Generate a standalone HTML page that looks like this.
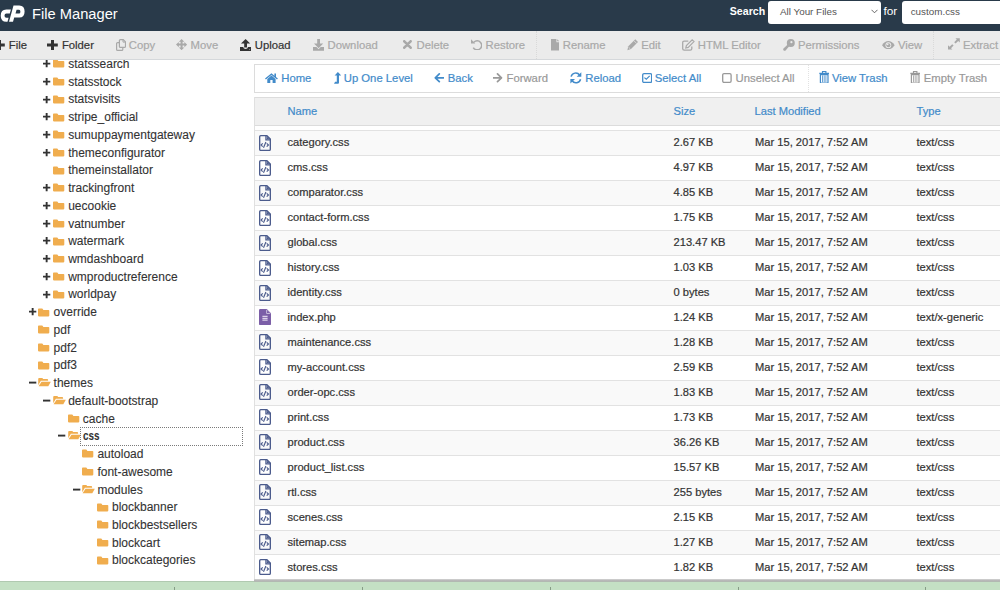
<!DOCTYPE html>
<html><head><meta charset="utf-8">
<style>
*{margin:0;padding:0;box-sizing:border-box}
html,body{width:1000px;height:590px;overflow:hidden;background:#fff;font-family:"Liberation Sans",sans-serif;position:relative}
.row span,#thead span,.tx{-webkit-text-stroke:0.2px currentColor}
.tt{-webkit-text-stroke:0.1px currentColor}
.abs{position:absolute}
#hdr{position:absolute;left:0;top:0;width:1000px;height:31px;background:#293a4a}
#title{position:absolute;left:32px;top:5px;font-size:14.7px;color:#fff;white-space:nowrap;line-height:18px}
#srch{position:absolute;left:729.8px;top:4px;font-size:10.6px;color:#fff;font-weight:bold;line-height:14px}
#sel{position:absolute;left:768px;top:0.5px;width:112.5px;height:23.5px;background:#fff;border-radius:3px}
#sel span{position:absolute;left:12px;top:5px;font-size:9.85px;color:#555;line-height:12px;white-space:nowrap}
#for{position:absolute;left:883.5px;top:4px;font-size:11.8px;color:#fff;line-height:14px}
#inp{position:absolute;left:902px;top:0.5px;width:110px;height:23.5px;background:#fff;border-radius:3px}
#inp span{position:absolute;left:8.7px;top:5px;font-size:9.85px;color:#555;line-height:12px;white-space:nowrap}
#tb{position:absolute;left:0;top:31px;width:1000px;height:28.5px;background:#ebebeb;border-bottom:1px solid #d5d8db}
.ti{position:absolute;top:0;height:28px;font-size:11.3px;line-height:28px;white-space:nowrap;color:#333}
.ti.d{color:#a6a6a6}
.ti svg{position:absolute}
.ti span{position:absolute;top:0}
.vdiv{position:absolute;top:0;width:1px;height:28px;border-left:1px dotted #d9d9d9}
#tb .tx{position:absolute;top:0;font-size:11.3px;line-height:28px;white-space:nowrap}
#nav .tx{position:absolute;top:0;font-size:11.3px;line-height:27px;white-space:nowrap}
.vdiv2{position:absolute;top:0;width:1px;height:27px;border-left:1px dotted #e2e2e2}
#tree{position:absolute;left:0;top:59.5px;width:254px;height:521.5px;overflow:hidden;background:#fff}
.tr{position:absolute;left:0;width:254px;height:9px}
.tr .pl,.tr .mi{position:absolute;top:1px;width:7.4px;height:7.4px}
.tr .pl:before,.tr .mi:before{content:"";position:absolute;left:0;top:2.85px;width:7.4px;height:1.7px;background:#333}
.tr .pl:after{content:"";position:absolute;left:2.85px;top:0;width:1.7px;height:7.4px;background:#333}
.tr svg{position:absolute;top:0}
.tt{position:absolute;top:-2.5px;font-size:12px;line-height:14px;color:#333;white-space:nowrap}
.tt.b{font-weight:bold;transform:scaleX(0.82);transform-origin:0 0}
#selbox{position:absolute;left:80px;top:427.2px;width:162.5px;height:18.5px;border:1px dotted #7a7a7a}
#main{position:absolute;left:254px;top:59.5px;width:746px;height:521.5px;overflow:hidden;background:#fff}
#nav{position:absolute;left:0;top:4px;width:760px;height:29px;border:1px solid #dcdcdc;background:#fff}
.ni{position:absolute;top:0;height:27px;font-size:11.3px;line-height:27px;white-space:nowrap;color:#428bca}
.ni.d{color:#999}
.ni svg{position:absolute}
.ni span{position:absolute;top:0}
#thead{position:absolute;left:0;top:37.5px;width:760px;height:28.5px;background:#f0f0f0;border:1px solid #dcdcdc}
#thead span{position:absolute;top:5.5px;font-size:11.15px;line-height:14px;color:#428bca}
#rows{position:absolute;left:0;top:0;width:746px}
.row{position:absolute;left:0;width:760px;height:25px;border-top:1px solid #e2e2e2;border-left:1px solid #e3e3e3}
.row span{position:absolute;top:4.2px;font-size:11.15px;line-height:14px;color:#333;white-space:nowrap}
.row .c1{left:32.5px}
.row .c2{left:418.5px}
.row .c3{left:500px}
.row .c4{left:661.5px}
.fi{position:absolute;left:3.9px;top:3.5px}
#shadow{position:absolute;left:254px;top:578.6px;width:746px;height:3.2px;background:linear-gradient(#d4d4d4,#adadad 70%,#b8c8b8);z-index:2}
#status{position:absolute;left:0;top:581px;width:1000px;height:9px;background:#c4e0c4;border-top:1px solid #b0c9b0}
.sd{position:absolute;top:587px;width:1px;height:3px;background:#869c86}
</style></head><body>
<div id="hdr">
 <svg class="abs" style="left:0;top:0" width="26" height="24" viewBox="0 0 26 24"><path d="M10.9 9.5H6.4Q0.7 9.5 0.7 15.65Q0.7 21.8 6.4 21.8H7.5L8.6 17.8H6.4Q4.5 17.8 4.5 15.65Q4.5 13.5 6.4 13.5H9.8Z" fill="#fff"/><path fill-rule="evenodd" d="M13.5 5.5H19.3Q24.6 5.5 24.6 11.55Q24.6 17.6 19.3 17.6H14.2L13 21.8H9ZM16.6 9.7H19Q20.4 9.7 20.4 11.65Q20.4 13.6 19 13.6H15.5Z" fill="#fff"/></svg>
 <div id="title">File Manager</div>
 <div id="srch">Search</div>
 <div id="sel"><span>All Your Files</span><svg class="abs" style="left:102.5px;top:8.8px" width="7" height="5" viewBox="0 0 7 5"><path d="M0.5 0.8L3.5 3.8L6.5 0.8" fill="none" stroke="#555" stroke-width="0.9"/></svg></div>
 <div id="for">for</div>
 <div id="inp"><span>custom.css</span></div>
</div>
<div id="tb">
<svg class="abs" style="left:-6.40px;top:8.75px" width="11" height="10.5" viewBox="0 0 11 10.5"><path d="M4 0H7V3.6H10.8V6.6H7V10.2H4V6.6H0V3.6H4Z" fill="#333"/></svg><span class="tx" style="left:8.75px;color:#333">File</span>
<svg class="abs" style="left:46.90px;top:8.75px" width="11" height="10.5" viewBox="0 0 11 10.5"><path d="M4 0H7V3.6H10.8V6.6H7V10.2H4V6.6H0V3.6H4Z" fill="#333"/></svg><span class="tx" style="left:61.90px;color:#333">Folder</span>
<svg class="abs" style="left:115.90px;top:8.10px" width="10" height="12" viewBox="0 0 10 12"><path d="M3.5 3.6H1.6Q0.6 3.6 0.6 4.6V10.4Q0.6 11.4 1.6 11.4H5.8Q6.8 11.4 6.8 10.4V8.6" fill="none" stroke="#a9a9a9" stroke-width="1.2"/><path d="M4.4 0.6H7.2L9.5 2.9V7.4Q9.5 8.4 8.5 8.4H4.4Q3.4 8.4 3.4 7.4V1.6Q3.4 0.6 4.4 0.6Z" fill="none" stroke="#a9a9a9" stroke-width="1.2"/><path d="M7 0.8V3.1H9.3" fill="none" stroke="#a9a9a9" stroke-width="1"/></svg><span class="tx" style="left:128.75px;color:#a9a9a9">Copy</span>
<svg class="abs" style="left:175.90px;top:7.70px" width="11.2" height="11.2" viewBox="0 0 11.2 11.2"><path d="M5.6 0L8.3 2.8H6.6V4.6H8.4V2.9L11.2 5.6L8.4 8.3V6.6H6.6V8.4H8.3L5.6 11.2L2.9 8.4H4.6V6.6H2.8V8.3L0 5.6L2.8 2.9V4.6H4.6V2.8H2.9Z" fill="#a9a9a9"/></svg><span class="tx" style="left:190.60px;color:#a9a9a9">Move</span>
<svg class="abs" style="left:239.70px;top:7.90px" width="11.2" height="12" viewBox="0 0 11.2 12"><path d="M5.6 0L10.2 4.5H7V8.4H4.2V4.5H1Z" fill="#333"/><path d="M0 8H3.2Q3.5 9.9 5.6 9.9Q7.7 9.9 8 8H11.2V11.9H0Z" fill="#333"/><circle cx="9.6" cy="10.6" r="0.45" fill="#ebebeb"/></svg><span class="tx" style="left:254.75px;color:#333">Upload</span>
<svg class="abs" style="left:312.90px;top:8.00px" width="11.2" height="12" viewBox="0 0 11.2 12"><path d="M4.2 0H7V4.6H10.2L5.6 9.2L1 4.6H4.2Z" fill="#a9a9a9"/><path d="M0 8.1H3.5L5.6 10.2L7.7 8.1H11.2V11.8H0Z" fill="#a9a9a9"/></svg><span class="tx" style="left:327.50px;color:#a9a9a9">Download</span>
<svg class="abs" style="left:402.70px;top:8.90px" width="9" height="9" viewBox="0 0 9 9"><path d="M1.3 1.3L7.6 7.7M7.6 1.3L1.3 7.7" stroke="#a9a9a9" stroke-width="2.6" stroke-linecap="round"/></svg><span class="tx" style="left:416.50px;color:#a9a9a9">Delete</span>
<svg class="abs" style="left:470.70px;top:8.10px" width="11.2" height="11" viewBox="0 0 11.2 11"><path d="M2.9 3.3A4.5 4.5 0 1 1 2.3 8.6" fill="none" stroke="#a9a9a9" stroke-width="1.5"/><path d="M0 0.3V4.6H4.3Z" fill="#a9a9a9"/></svg><span class="tx" style="left:485.60px;color:#a9a9a9">Restore</span>
<div class="vdiv" style="left:535.6px"></div>
<svg class="abs" style="left:550.90px;top:8.10px" width="8.5" height="11.5" viewBox="0 0 8.5 11.5"><path d="M0 0H5.4V3.2H8.3V11.5H0Z" fill="#a9a9a9"/><path d="M6.2 0.2L8.2 2.3H6.2Z" fill="#a9a9a9"/></svg><span class="tx" style="left:562.75px;color:#a9a9a9">Rename</span>
<svg class="abs" style="left:626.60px;top:8.10px" width="11.4" height="11.8" viewBox="0 0 11.4 11.8"><path d="M8.3 0.3L11 3L4 10L0.4 11.3L1.3 7.3Z" fill="#a9a9a9"/><path d="M7 1.8L9.6 4.4M1.5 8.1L3.4 10" stroke="#ebebeb" stroke-width="0.7"/></svg><span class="tx" style="left:641.25px;color:#a9a9a9">Edit</span>
<svg class="abs" style="left:681.90px;top:8.00px" width="12.8" height="12" viewBox="0 0 12.8 12"><path d="M6.3 2.2H2.2Q0.7 2.2 0.7 3.7V9.8Q0.7 11.2 2.2 11.2H8.3Q9.8 11.2 9.8 9.8V7.6" fill="none" stroke="#a9a9a9" stroke-width="1.3"/><path d="M10.2 0.8L12 2.6L6.2 8.4L3.8 9L4.4 6.6Z" fill="none" stroke="#a9a9a9" stroke-width="1.2"/></svg><span class="tx" style="left:697.75px;color:#a9a9a9">HTML Editor</span>
<svg class="abs" style="left:783.10px;top:8.10px" width="12" height="12" viewBox="0 0 12 12"><circle cx="7.8" cy="4" r="4" fill="#a9a9a9"/><path d="M5 5.2L6.6 6.8L2.6 11.4Q1.4 12.2 0.5 11.2Q-0.2 10.3 0.7 9.2Z" fill="#a9a9a9"/><circle cx="8.4" cy="3.2" r="1.1" fill="#ebebeb"/></svg><span class="tx" style="left:798.00px;color:#a9a9a9">Permissions</span>
<svg class="abs" style="left:882.20px;top:9.60px" width="12.8" height="8.5" viewBox="0 0 12.8 8.5"><path d="M0 4.15Q3 0 6.35 0Q9.7 0 12.7 4.15Q9.7 8.3 6.35 8.3Q3 8.3 0 4.15Z" fill="#a9a9a9"/><circle cx="6.35" cy="4.15" r="2.9" fill="#ebebeb"/><circle cx="6.35" cy="4.3" r="2" fill="#a9a9a9"/><circle cx="5.7" cy="3.4" r="0.8" fill="#ebebeb"/></svg><span class="tx" style="left:898.00px;color:#a9a9a9">View</span>
<div class="vdiv" style="left:933.1px"></div>
<svg class="abs" style="left:947.90px;top:7.40px" width="12" height="12" viewBox="0 0 12 12"><path d="M7.4 0.2H11.8V4.6L10.2 3L7.6 5.6L6.2 4.2L8.8 1.6Z" fill="#a9a9a9"/><path d="M4.4 11.6H0V7.2L1.6 8.8L4.2 6.2L5.6 7.6L3 10.2Z" fill="#a9a9a9"/></svg><span class="tx" style="left:963.00px;color:#a9a9a9">Extract</span>
</div>
<div id="tree">
 <div style="position:absolute;left:0;top:-59.5px;width:254px;height:590px">
<div class="tr" style="top:59.50px"><svg style="left:43.3px;top:0.6px" width="8" height="8" viewBox="0 0 8 8"><path d="M0 3.65H7.3M3.65 0.1V7.2" stroke="#333" stroke-width="1.9"/></svg><svg style="left:52.9px;top:-0.2px" width="12" height="9" viewBox="0 0 12 9"><path d="M0 1.4Q0 0.6 0.8 0.6H4.3L5.4 1.9H10.5Q11.3 1.9 11.3 2.7V7.6Q11.3 8.4 10.5 8.4H0.8Q0 8.4 0 7.6Z" fill="#f0ad4e"/></svg><span class="tt" style="left:68.2px">statssearch</span></div>
<div class="tr" style="top:77.23px"><svg style="left:43.3px;top:0.6px" width="8" height="8" viewBox="0 0 8 8"><path d="M0 3.65H7.3M3.65 0.1V7.2" stroke="#333" stroke-width="1.9"/></svg><svg style="left:52.9px;top:-0.2px" width="12" height="9" viewBox="0 0 12 9"><path d="M0 1.4Q0 0.6 0.8 0.6H4.3L5.4 1.9H10.5Q11.3 1.9 11.3 2.7V7.6Q11.3 8.4 10.5 8.4H0.8Q0 8.4 0 7.6Z" fill="#f0ad4e"/></svg><span class="tt" style="left:68.2px">statsstock</span></div>
<div class="tr" style="top:94.96px"><svg style="left:43.3px;top:0.6px" width="8" height="8" viewBox="0 0 8 8"><path d="M0 3.65H7.3M3.65 0.1V7.2" stroke="#333" stroke-width="1.9"/></svg><svg style="left:52.9px;top:-0.2px" width="12" height="9" viewBox="0 0 12 9"><path d="M0 1.4Q0 0.6 0.8 0.6H4.3L5.4 1.9H10.5Q11.3 1.9 11.3 2.7V7.6Q11.3 8.4 10.5 8.4H0.8Q0 8.4 0 7.6Z" fill="#f0ad4e"/></svg><span class="tt" style="left:68.2px">statsvisits</span></div>
<div class="tr" style="top:112.69px"><svg style="left:43.3px;top:0.6px" width="8" height="8" viewBox="0 0 8 8"><path d="M0 3.65H7.3M3.65 0.1V7.2" stroke="#333" stroke-width="1.9"/></svg><svg style="left:52.9px;top:-0.2px" width="12" height="9" viewBox="0 0 12 9"><path d="M0 1.4Q0 0.6 0.8 0.6H4.3L5.4 1.9H10.5Q11.3 1.9 11.3 2.7V7.6Q11.3 8.4 10.5 8.4H0.8Q0 8.4 0 7.6Z" fill="#f0ad4e"/></svg><span class="tt" style="left:68.2px">stripe_official</span></div>
<div class="tr" style="top:130.42px"><svg style="left:43.3px;top:0.6px" width="8" height="8" viewBox="0 0 8 8"><path d="M0 3.65H7.3M3.65 0.1V7.2" stroke="#333" stroke-width="1.9"/></svg><svg style="left:52.9px;top:-0.2px" width="12" height="9" viewBox="0 0 12 9"><path d="M0 1.4Q0 0.6 0.8 0.6H4.3L5.4 1.9H10.5Q11.3 1.9 11.3 2.7V7.6Q11.3 8.4 10.5 8.4H0.8Q0 8.4 0 7.6Z" fill="#f0ad4e"/></svg><span class="tt" style="left:68.2px">sumuppaymentgateway</span></div>
<div class="tr" style="top:148.15px"><svg style="left:43.3px;top:0.6px" width="8" height="8" viewBox="0 0 8 8"><path d="M0 3.65H7.3M3.65 0.1V7.2" stroke="#333" stroke-width="1.9"/></svg><svg style="left:52.9px;top:-0.2px" width="12" height="9" viewBox="0 0 12 9"><path d="M0 1.4Q0 0.6 0.8 0.6H4.3L5.4 1.9H10.5Q11.3 1.9 11.3 2.7V7.6Q11.3 8.4 10.5 8.4H0.8Q0 8.4 0 7.6Z" fill="#f0ad4e"/></svg><span class="tt" style="left:68.2px">themeconfigurator</span></div>
<div class="tr" style="top:165.88px"><svg style="left:52.9px;top:-0.2px" width="12" height="9" viewBox="0 0 12 9"><path d="M0 1.4Q0 0.6 0.8 0.6H4.3L5.4 1.9H10.5Q11.3 1.9 11.3 2.7V7.6Q11.3 8.4 10.5 8.4H0.8Q0 8.4 0 7.6Z" fill="#f0ad4e"/></svg><span class="tt" style="left:68.2px">themeinstallator</span></div>
<div class="tr" style="top:183.61px"><svg style="left:43.3px;top:0.6px" width="8" height="8" viewBox="0 0 8 8"><path d="M0 3.65H7.3M3.65 0.1V7.2" stroke="#333" stroke-width="1.9"/></svg><svg style="left:52.9px;top:-0.2px" width="12" height="9" viewBox="0 0 12 9"><path d="M0 1.4Q0 0.6 0.8 0.6H4.3L5.4 1.9H10.5Q11.3 1.9 11.3 2.7V7.6Q11.3 8.4 10.5 8.4H0.8Q0 8.4 0 7.6Z" fill="#f0ad4e"/></svg><span class="tt" style="left:68.2px">trackingfront</span></div>
<div class="tr" style="top:201.34px"><svg style="left:43.3px;top:0.6px" width="8" height="8" viewBox="0 0 8 8"><path d="M0 3.65H7.3M3.65 0.1V7.2" stroke="#333" stroke-width="1.9"/></svg><svg style="left:52.9px;top:-0.2px" width="12" height="9" viewBox="0 0 12 9"><path d="M0 1.4Q0 0.6 0.8 0.6H4.3L5.4 1.9H10.5Q11.3 1.9 11.3 2.7V7.6Q11.3 8.4 10.5 8.4H0.8Q0 8.4 0 7.6Z" fill="#f0ad4e"/></svg><span class="tt" style="left:68.2px">uecookie</span></div>
<div class="tr" style="top:219.07px"><svg style="left:43.3px;top:0.6px" width="8" height="8" viewBox="0 0 8 8"><path d="M0 3.65H7.3M3.65 0.1V7.2" stroke="#333" stroke-width="1.9"/></svg><svg style="left:52.9px;top:-0.2px" width="12" height="9" viewBox="0 0 12 9"><path d="M0 1.4Q0 0.6 0.8 0.6H4.3L5.4 1.9H10.5Q11.3 1.9 11.3 2.7V7.6Q11.3 8.4 10.5 8.4H0.8Q0 8.4 0 7.6Z" fill="#f0ad4e"/></svg><span class="tt" style="left:68.2px">vatnumber</span></div>
<div class="tr" style="top:236.80px"><svg style="left:43.3px;top:0.6px" width="8" height="8" viewBox="0 0 8 8"><path d="M0 3.65H7.3M3.65 0.1V7.2" stroke="#333" stroke-width="1.9"/></svg><svg style="left:52.9px;top:-0.2px" width="12" height="9" viewBox="0 0 12 9"><path d="M0 1.4Q0 0.6 0.8 0.6H4.3L5.4 1.9H10.5Q11.3 1.9 11.3 2.7V7.6Q11.3 8.4 10.5 8.4H0.8Q0 8.4 0 7.6Z" fill="#f0ad4e"/></svg><span class="tt" style="left:68.2px">watermark</span></div>
<div class="tr" style="top:254.53px"><svg style="left:43.3px;top:0.6px" width="8" height="8" viewBox="0 0 8 8"><path d="M0 3.65H7.3M3.65 0.1V7.2" stroke="#333" stroke-width="1.9"/></svg><svg style="left:52.9px;top:-0.2px" width="12" height="9" viewBox="0 0 12 9"><path d="M0 1.4Q0 0.6 0.8 0.6H4.3L5.4 1.9H10.5Q11.3 1.9 11.3 2.7V7.6Q11.3 8.4 10.5 8.4H0.8Q0 8.4 0 7.6Z" fill="#f0ad4e"/></svg><span class="tt" style="left:68.2px">wmdashboard</span></div>
<div class="tr" style="top:272.26px"><svg style="left:43.3px;top:0.6px" width="8" height="8" viewBox="0 0 8 8"><path d="M0 3.65H7.3M3.65 0.1V7.2" stroke="#333" stroke-width="1.9"/></svg><svg style="left:52.9px;top:-0.2px" width="12" height="9" viewBox="0 0 12 9"><path d="M0 1.4Q0 0.6 0.8 0.6H4.3L5.4 1.9H10.5Q11.3 1.9 11.3 2.7V7.6Q11.3 8.4 10.5 8.4H0.8Q0 8.4 0 7.6Z" fill="#f0ad4e"/></svg><span class="tt" style="left:68.2px">wmproductreference</span></div>
<div class="tr" style="top:289.99px"><svg style="left:43.3px;top:0.6px" width="8" height="8" viewBox="0 0 8 8"><path d="M0 3.65H7.3M3.65 0.1V7.2" stroke="#333" stroke-width="1.9"/></svg><svg style="left:52.9px;top:-0.2px" width="12" height="9" viewBox="0 0 12 9"><path d="M0 1.4Q0 0.6 0.8 0.6H4.3L5.4 1.9H10.5Q11.3 1.9 11.3 2.7V7.6Q11.3 8.4 10.5 8.4H0.8Q0 8.4 0 7.6Z" fill="#f0ad4e"/></svg><span class="tt" style="left:68.2px">worldpay</span></div>
<div class="tr" style="top:307.72px"><svg style="left:28.7px;top:0.6px" width="8" height="8" viewBox="0 0 8 8"><path d="M0 3.65H7.3M3.65 0.1V7.2" stroke="#333" stroke-width="1.9"/></svg><svg style="left:38.3px;top:-0.2px" width="12" height="9" viewBox="0 0 12 9"><path d="M0 1.4Q0 0.6 0.8 0.6H4.3L5.4 1.9H10.5Q11.3 1.9 11.3 2.7V7.6Q11.3 8.4 10.5 8.4H0.8Q0 8.4 0 7.6Z" fill="#f0ad4e"/></svg><span class="tt" style="left:53.6px">override</span></div>
<div class="tr" style="top:325.45px"><svg style="left:38.3px;top:-0.2px" width="12" height="9" viewBox="0 0 12 9"><path d="M0 1.4Q0 0.6 0.8 0.6H4.3L5.4 1.9H10.5Q11.3 1.9 11.3 2.7V7.6Q11.3 8.4 10.5 8.4H0.8Q0 8.4 0 7.6Z" fill="#f0ad4e"/></svg><span class="tt" style="left:53.6px">pdf</span></div>
<div class="tr" style="top:343.18px"><svg style="left:38.3px;top:-0.2px" width="12" height="9" viewBox="0 0 12 9"><path d="M0 1.4Q0 0.6 0.8 0.6H4.3L5.4 1.9H10.5Q11.3 1.9 11.3 2.7V7.6Q11.3 8.4 10.5 8.4H0.8Q0 8.4 0 7.6Z" fill="#f0ad4e"/></svg><span class="tt" style="left:53.6px">pdf2</span></div>
<div class="tr" style="top:360.91px"><svg style="left:38.3px;top:-0.2px" width="12" height="9" viewBox="0 0 12 9"><path d="M0 1.4Q0 0.6 0.8 0.6H4.3L5.4 1.9H10.5Q11.3 1.9 11.3 2.7V7.6Q11.3 8.4 10.5 8.4H0.8Q0 8.4 0 7.6Z" fill="#f0ad4e"/></svg><span class="tt" style="left:53.6px">pdf3</span></div>
<div class="tr" style="top:378.64px"><svg style="left:28.7px;top:0.6px" width="8" height="8" viewBox="0 0 8 8"><path d="M0 3.6H7.3" stroke="#333" stroke-width="1.9"/></svg><svg style="left:38.3px;top:-0.4px" width="13" height="9" viewBox="0 0 13 9"><path d="M0.2 0.9Q0.2 0 1.1 0H4.3L5.2 1H9.2Q10.1 1 10.1 1.9V2.8H2.9L0.2 7.2Z" fill="#f0ad4e"/><path d="M3.5 3.7H12.8L10.3 8.3H0.6Z" fill="#f0ad4e"/></svg><span class="tt" style="left:53.6px">themes</span></div>
<div class="tr" style="top:396.37px"><svg style="left:43.3px;top:0.6px" width="8" height="8" viewBox="0 0 8 8"><path d="M0 3.6H7.3" stroke="#333" stroke-width="1.9"/></svg><svg style="left:52.9px;top:-0.4px" width="13" height="9" viewBox="0 0 13 9"><path d="M0.2 0.9Q0.2 0 1.1 0H4.3L5.2 1H9.2Q10.1 1 10.1 1.9V2.8H2.9L0.2 7.2Z" fill="#f0ad4e"/><path d="M3.5 3.7H12.8L10.3 8.3H0.6Z" fill="#f0ad4e"/></svg><span class="tt" style="left:68.2px">default-bootstrap</span></div>
<div class="tr" style="top:414.10px"><svg style="left:67.5px;top:-0.2px" width="12" height="9" viewBox="0 0 12 9"><path d="M0 1.4Q0 0.6 0.8 0.6H4.3L5.4 1.9H10.5Q11.3 1.9 11.3 2.7V7.6Q11.3 8.4 10.5 8.4H0.8Q0 8.4 0 7.6Z" fill="#f0ad4e"/></svg><span class="tt" style="left:82.8px">cache</span></div>
<div class="tr" style="top:431.83px"><svg style="left:57.9px;top:0.6px" width="8" height="8" viewBox="0 0 8 8"><path d="M0 3.6H7.3" stroke="#333" stroke-width="1.9"/></svg><svg style="left:67.5px;top:-0.4px" width="13" height="9" viewBox="0 0 13 9"><path d="M0.2 0.9Q0.2 0 1.1 0H4.3L5.2 1H9.2Q10.1 1 10.1 1.9V2.8H2.9L0.2 7.2Z" fill="#f0ad4e"/><path d="M3.5 3.7H12.8L10.3 8.3H0.6Z" fill="#f0ad4e"/></svg><span class="tt b" style="left:82.8px">css</span></div>
<div class="tr" style="top:449.56px"><svg style="left:82.1px;top:-0.2px" width="12" height="9" viewBox="0 0 12 9"><path d="M0 1.4Q0 0.6 0.8 0.6H4.3L5.4 1.9H10.5Q11.3 1.9 11.3 2.7V7.6Q11.3 8.4 10.5 8.4H0.8Q0 8.4 0 7.6Z" fill="#f0ad4e"/></svg><span class="tt" style="left:97.4px">autoload</span></div>
<div class="tr" style="top:467.29px"><svg style="left:82.1px;top:-0.2px" width="12" height="9" viewBox="0 0 12 9"><path d="M0 1.4Q0 0.6 0.8 0.6H4.3L5.4 1.9H10.5Q11.3 1.9 11.3 2.7V7.6Q11.3 8.4 10.5 8.4H0.8Q0 8.4 0 7.6Z" fill="#f0ad4e"/></svg><span class="tt" style="left:97.4px">font-awesome</span></div>
<div class="tr" style="top:485.02px"><svg style="left:72.5px;top:0.6px" width="8" height="8" viewBox="0 0 8 8"><path d="M0 3.6H7.3" stroke="#333" stroke-width="1.9"/></svg><svg style="left:82.1px;top:-0.4px" width="13" height="9" viewBox="0 0 13 9"><path d="M0.2 0.9Q0.2 0 1.1 0H4.3L5.2 1H9.2Q10.1 1 10.1 1.9V2.8H2.9L0.2 7.2Z" fill="#f0ad4e"/><path d="M3.5 3.7H12.8L10.3 8.3H0.6Z" fill="#f0ad4e"/></svg><span class="tt" style="left:97.4px">modules</span></div>
<div class="tr" style="top:502.75px"><svg style="left:96.7px;top:-0.2px" width="12" height="9" viewBox="0 0 12 9"><path d="M0 1.4Q0 0.6 0.8 0.6H4.3L5.4 1.9H10.5Q11.3 1.9 11.3 2.7V7.6Q11.3 8.4 10.5 8.4H0.8Q0 8.4 0 7.6Z" fill="#f0ad4e"/></svg><span class="tt" style="left:112.0px">blockbanner</span></div>
<div class="tr" style="top:520.48px"><svg style="left:96.7px;top:-0.2px" width="12" height="9" viewBox="0 0 12 9"><path d="M0 1.4Q0 0.6 0.8 0.6H4.3L5.4 1.9H10.5Q11.3 1.9 11.3 2.7V7.6Q11.3 8.4 10.5 8.4H0.8Q0 8.4 0 7.6Z" fill="#f0ad4e"/></svg><span class="tt" style="left:112.0px">blockbestsellers</span></div>
<div class="tr" style="top:538.21px"><svg style="left:96.7px;top:-0.2px" width="12" height="9" viewBox="0 0 12 9"><path d="M0 1.4Q0 0.6 0.8 0.6H4.3L5.4 1.9H10.5Q11.3 1.9 11.3 2.7V7.6Q11.3 8.4 10.5 8.4H0.8Q0 8.4 0 7.6Z" fill="#f0ad4e"/></svg><span class="tt" style="left:112.0px">blockcart</span></div>
<div class="tr" style="top:555.94px"><svg style="left:96.7px;top:-0.2px" width="12" height="9" viewBox="0 0 12 9"><path d="M0 1.4Q0 0.6 0.8 0.6H4.3L5.4 1.9H10.5Q11.3 1.9 11.3 2.7V7.6Q11.3 8.4 10.5 8.4H0.8Q0 8.4 0 7.6Z" fill="#f0ad4e"/></svg><span class="tt" style="left:112.0px">blockcategories</span></div>
 <div id="selbox"></div>
 </div>
</div>
<div id="main">
 <div id="nav">
<svg class="abs" style="left:10.00px;top:8.20px" width="13" height="10.5" viewBox="0 0 13 10.5"><path d="M6.45 0.3L0 5.6L0.9 6.6L6.45 2L12 6.6L12.9 5.6L11 4V0.6H9.4V2.7Z" fill="#428bca"/><path d="M2.3 5.9L6.45 2.6L10.6 5.9V10.2H7.6V7H5.3V10.2H2.3Z" fill="#428bca"/></svg><span class="tx" style="left:26.25px;color:#428bca">Home</span>
<svg class="abs" style="left:78.80px;top:7.60px" width="7.2" height="11.8" viewBox="0 0 7.2 11.8"><path d="M3.9 0L7.2 3.5H5V10.7Q5 11.7 4 11.7H0L1.1 9.8H2.8V3.5H0.6Z" fill="#428bca"/></svg><span class="tx" style="left:88.75px;color:#428bca">Up One Level</span>
<svg class="abs" style="left:179.40px;top:8.60px" width="9.8" height="9.7" viewBox="0 0 9.8 9.7"><path d="M9.7 4.8H1.6M5.3 0.9L1.3 4.8L5.3 8.7" fill="none" stroke="#428bca" stroke-width="1.7" stroke-linecap="round" stroke-linejoin="round"/></svg><span class="tx" style="left:192.75px;color:#428bca">Back</span>
<svg class="abs" style="left:237.90px;top:8.60px" width="9.8" height="9.7" viewBox="0 0 9.8 9.7"><path d="M0.1 4.8H8.2M4.5 0.9L8.5 4.8L4.5 8.7" fill="none" stroke="#999" stroke-width="1.7" stroke-linecap="round" stroke-linejoin="round"/></svg><span class="tx" style="left:251.50px;color:#999">Forward</span>
<svg class="abs" style="left:315.20px;top:7.40px" width="11.7" height="11.9" viewBox="0 0 11.7 11.9"><path d="M1.1 4.6A4.8 4.8 0 0 1 9.6 3" fill="none" stroke="#428bca" stroke-width="1.5"/><path d="M11.3 0.2V4.8H6.7Z" fill="#428bca"/><path d="M10.6 7.2A4.8 4.8 0 0 1 2.1 8.8" fill="none" stroke="#428bca" stroke-width="1.5"/><path d="M0.4 11.6V7H5Z" fill="#428bca"/></svg><span class="tx" style="left:330.25px;color:#428bca">Reload</span>
<svg class="abs" style="left:386.60px;top:8.20px" width="10.3" height="10.2" viewBox="0 0 10.3 10.2"><rect x="0.7" y="0.7" width="8.9" height="8.8" rx="1.3" fill="none" stroke="#428bca" stroke-width="1.3"/><path d="M2.4 4.6L4.3 6.3L7.7 2.8" fill="none" stroke="#428bca" stroke-width="1.2"/></svg><span class="tx" style="left:399.75px;color:#428bca">Select All</span>
<svg class="abs" style="left:467.10px;top:8.40px" width="9.8" height="10" viewBox="0 0 9.8 10"><rect x="0.7" y="0.7" width="8.4" height="8.6" rx="1.3" fill="none" stroke="#999" stroke-width="1.3"/></svg><span class="tx" style="left:480.60px;color:#999">Unselect All</span>
<div class="vdiv2" style="left:552.50px"></div>
<svg class="abs" style="left:563.70px;top:6.40px" width="10.4" height="12.2" viewBox="0 0 10.4 12.2"><path d="M0.3 2.4H10.1" stroke="#428bca" stroke-width="1.3"/><path d="M3.5 2.2V0.5H6.9V2.2" fill="none" stroke="#428bca" stroke-width="1.1"/><path d="M1.4 3.6H9V11.4Q9 12 8.4 12H2Q1.4 12 1.4 11.4Z" fill="none" stroke="#428bca" stroke-width="1.2"/><path d="M3.5 4.4V11.2M5.2 4.4V11.2M6.9 4.4V11.2" stroke="#428bca" stroke-width="0.8"/></svg><span class="tx" style="left:576.90px;color:#428bca">View Trash</span>
<svg class="abs" style="left:654.90px;top:6.40px" width="10.4" height="12.2" viewBox="0 0 10.4 12.2"><path d="M0.3 2.4H10.1" stroke="#999" stroke-width="1.3"/><path d="M3.5 2.2V0.5H6.9V2.2" fill="none" stroke="#999" stroke-width="1.1"/><path d="M1.4 3.6H9V11.4Q9 12 8.4 12H2Q1.4 12 1.4 11.4Z" fill="none" stroke="#999" stroke-width="1.2"/><path d="M3.5 4.4V11.2M5.2 4.4V11.2M6.9 4.4V11.2" stroke="#999" stroke-width="0.8"/></svg><span class="tx" style="left:668.75px;color:#999">Empty Trash</span>
 </div>
 <div id="thead"><span style="left:32.5px">Name</span><span style="left:418.5px">Size</span><span style="left:499.5px">Last Modified</span><span style="left:661.5px">Type</span></div>
 <div style="position:absolute;left:0;top:-59.5px">
<div class="row" style="top:130.30px;background:#f9f9f9"><svg class="fi" width="12" height="16.2" viewBox="0 0 12 16.2"><path d="M0.67 1.9Q0.67 0.67 1.9 0.67H7.9L11.33 4.1V14.2Q11.33 15.43 10.1 15.43H1.9Q0.67 15.43 0.67 14.2Z" fill="none" stroke="#4b5b8c" stroke-width="1.35"/><path d="M6.9 0.8V4.8H11.2" fill="none" stroke="#4b5b8c" stroke-width="1.2"/><path d="M7.6 1.2L10.8 4.2H7.6Z" fill="#4b5b8c"/><path d="M3.7 8.3L2 10L3.7 11.7M7.7 8.3L9.5 10L7.7 11.7M6.9 7L4.5 12.8" fill="none" stroke="#4b5b8c" stroke-width="1.15"/></svg><span style="margin-top:-0.30px" class="c1">category.css</span><span style="margin-top:-0.30px" class="c2">2.67 KB</span><span style="margin-top:-0.30px" class="c3">Mar 15, 2017, 7:52 AM</span><span style="margin-top:-0.30px" class="c4">text/css</span></div>
<div class="row" style="top:155.25px;background:#fff"><svg class="fi" width="12" height="16.2" viewBox="0 0 12 16.2"><path d="M0.67 1.9Q0.67 0.67 1.9 0.67H7.9L11.33 4.1V14.2Q11.33 15.43 10.1 15.43H1.9Q0.67 15.43 0.67 14.2Z" fill="none" stroke="#4b5b8c" stroke-width="1.35"/><path d="M6.9 0.8V4.8H11.2" fill="none" stroke="#4b5b8c" stroke-width="1.2"/><path d="M7.6 1.2L10.8 4.2H7.6Z" fill="#4b5b8c"/><path d="M3.7 8.3L2 10L3.7 11.7M7.7 8.3L9.5 10L7.7 11.7M6.9 7L4.5 12.8" fill="none" stroke="#4b5b8c" stroke-width="1.15"/></svg><span style="margin-top:-0.25px" class="c1">cms.css</span><span style="margin-top:-0.25px" class="c2">4.97 KB</span><span style="margin-top:-0.25px" class="c3">Mar 15, 2017, 7:52 AM</span><span style="margin-top:-0.25px" class="c4">text/css</span></div>
<div class="row" style="top:180.20px;background:#f9f9f9"><svg class="fi" width="12" height="16.2" viewBox="0 0 12 16.2"><path d="M0.67 1.9Q0.67 0.67 1.9 0.67H7.9L11.33 4.1V14.2Q11.33 15.43 10.1 15.43H1.9Q0.67 15.43 0.67 14.2Z" fill="none" stroke="#4b5b8c" stroke-width="1.35"/><path d="M6.9 0.8V4.8H11.2" fill="none" stroke="#4b5b8c" stroke-width="1.2"/><path d="M7.6 1.2L10.8 4.2H7.6Z" fill="#4b5b8c"/><path d="M3.7 8.3L2 10L3.7 11.7M7.7 8.3L9.5 10L7.7 11.7M6.9 7L4.5 12.8" fill="none" stroke="#4b5b8c" stroke-width="1.15"/></svg><span style="margin-top:-0.20px" class="c1">comparator.css</span><span style="margin-top:-0.20px" class="c2">4.85 KB</span><span style="margin-top:-0.20px" class="c3">Mar 15, 2017, 7:52 AM</span><span style="margin-top:-0.20px" class="c4">text/css</span></div>
<div class="row" style="top:205.15px;background:#fff"><svg class="fi" width="12" height="16.2" viewBox="0 0 12 16.2"><path d="M0.67 1.9Q0.67 0.67 1.9 0.67H7.9L11.33 4.1V14.2Q11.33 15.43 10.1 15.43H1.9Q0.67 15.43 0.67 14.2Z" fill="none" stroke="#4b5b8c" stroke-width="1.35"/><path d="M6.9 0.8V4.8H11.2" fill="none" stroke="#4b5b8c" stroke-width="1.2"/><path d="M7.6 1.2L10.8 4.2H7.6Z" fill="#4b5b8c"/><path d="M3.7 8.3L2 10L3.7 11.7M7.7 8.3L9.5 10L7.7 11.7M6.9 7L4.5 12.8" fill="none" stroke="#4b5b8c" stroke-width="1.15"/></svg><span style="margin-top:-0.15px" class="c1">contact-form.css</span><span style="margin-top:-0.15px" class="c2">1.75 KB</span><span style="margin-top:-0.15px" class="c3">Mar 15, 2017, 7:52 AM</span><span style="margin-top:-0.15px" class="c4">text/css</span></div>
<div class="row" style="top:230.10px;background:#f9f9f9"><svg class="fi" width="12" height="16.2" viewBox="0 0 12 16.2"><path d="M0.67 1.9Q0.67 0.67 1.9 0.67H7.9L11.33 4.1V14.2Q11.33 15.43 10.1 15.43H1.9Q0.67 15.43 0.67 14.2Z" fill="none" stroke="#4b5b8c" stroke-width="1.35"/><path d="M6.9 0.8V4.8H11.2" fill="none" stroke="#4b5b8c" stroke-width="1.2"/><path d="M7.6 1.2L10.8 4.2H7.6Z" fill="#4b5b8c"/><path d="M3.7 8.3L2 10L3.7 11.7M7.7 8.3L9.5 10L7.7 11.7M6.9 7L4.5 12.8" fill="none" stroke="#4b5b8c" stroke-width="1.15"/></svg><span style="margin-top:-0.10px" class="c1">global.css</span><span style="margin-top:-0.10px" class="c2">213.47 KB</span><span style="margin-top:-0.10px" class="c3">Mar 15, 2017, 7:52 AM</span><span style="margin-top:-0.10px" class="c4">text/css</span></div>
<div class="row" style="top:255.05px;background:#fff"><svg class="fi" width="12" height="16.2" viewBox="0 0 12 16.2"><path d="M0.67 1.9Q0.67 0.67 1.9 0.67H7.9L11.33 4.1V14.2Q11.33 15.43 10.1 15.43H1.9Q0.67 15.43 0.67 14.2Z" fill="none" stroke="#4b5b8c" stroke-width="1.35"/><path d="M6.9 0.8V4.8H11.2" fill="none" stroke="#4b5b8c" stroke-width="1.2"/><path d="M7.6 1.2L10.8 4.2H7.6Z" fill="#4b5b8c"/><path d="M3.7 8.3L2 10L3.7 11.7M7.7 8.3L9.5 10L7.7 11.7M6.9 7L4.5 12.8" fill="none" stroke="#4b5b8c" stroke-width="1.15"/></svg><span style="margin-top:-0.05px" class="c1">history.css</span><span style="margin-top:-0.05px" class="c2">1.03 KB</span><span style="margin-top:-0.05px" class="c3">Mar 15, 2017, 7:52 AM</span><span style="margin-top:-0.05px" class="c4">text/css</span></div>
<div class="row" style="top:280.00px;background:#f9f9f9"><svg class="fi" width="12" height="16.2" viewBox="0 0 12 16.2"><path d="M0.67 1.9Q0.67 0.67 1.9 0.67H7.9L11.33 4.1V14.2Q11.33 15.43 10.1 15.43H1.9Q0.67 15.43 0.67 14.2Z" fill="none" stroke="#4b5b8c" stroke-width="1.35"/><path d="M6.9 0.8V4.8H11.2" fill="none" stroke="#4b5b8c" stroke-width="1.2"/><path d="M7.6 1.2L10.8 4.2H7.6Z" fill="#4b5b8c"/><path d="M3.7 8.3L2 10L3.7 11.7M7.7 8.3L9.5 10L7.7 11.7M6.9 7L4.5 12.8" fill="none" stroke="#4b5b8c" stroke-width="1.15"/></svg><span style="margin-top:0.00px" class="c1">identity.css</span><span style="margin-top:0.00px" class="c2">0 bytes</span><span style="margin-top:0.00px" class="c3">Mar 15, 2017, 7:52 AM</span><span style="margin-top:0.00px" class="c4">text/css</span></div>
<div class="row" style="top:304.95px;background:#fff"><svg class="fi" width="12" height="16.2" viewBox="0 0 12 16.2"><path d="M0 1.2Q0 0 1.2 0H7.8L12 4.2V14.9Q12 16.1 10.8 16.1H1.2Q0 16.1 0 14.9Z" fill="#7b5ea7"/><path d="M7.3 0.6L11.4 4.7H7.3Z" fill="#fff" opacity="0.75"/><path d="M8 1.4L10.6 4H8Z" fill="#7b5ea7"/><path d="M3.4 7.4H8.6M3.4 9.3H8.6M3.4 11.2H8.6" stroke="#ddd3ea" stroke-width="1.2"/></svg><span style="margin-top:0.05px" class="c1">index.php</span><span style="margin-top:0.05px" class="c2">1.24 KB</span><span style="margin-top:0.05px" class="c3">Mar 15, 2017, 7:52 AM</span><span style="margin-top:0.05px" class="c4">text/x-generic</span></div>
<div class="row" style="top:329.90px;background:#f9f9f9"><svg class="fi" width="12" height="16.2" viewBox="0 0 12 16.2"><path d="M0.67 1.9Q0.67 0.67 1.9 0.67H7.9L11.33 4.1V14.2Q11.33 15.43 10.1 15.43H1.9Q0.67 15.43 0.67 14.2Z" fill="none" stroke="#4b5b8c" stroke-width="1.35"/><path d="M6.9 0.8V4.8H11.2" fill="none" stroke="#4b5b8c" stroke-width="1.2"/><path d="M7.6 1.2L10.8 4.2H7.6Z" fill="#4b5b8c"/><path d="M3.7 8.3L2 10L3.7 11.7M7.7 8.3L9.5 10L7.7 11.7M6.9 7L4.5 12.8" fill="none" stroke="#4b5b8c" stroke-width="1.15"/></svg><span style="margin-top:0.10px" class="c1">maintenance.css</span><span style="margin-top:0.10px" class="c2">1.28 KB</span><span style="margin-top:0.10px" class="c3">Mar 15, 2017, 7:52 AM</span><span style="margin-top:0.10px" class="c4">text/css</span></div>
<div class="row" style="top:354.85px;background:#fff"><svg class="fi" width="12" height="16.2" viewBox="0 0 12 16.2"><path d="M0.67 1.9Q0.67 0.67 1.9 0.67H7.9L11.33 4.1V14.2Q11.33 15.43 10.1 15.43H1.9Q0.67 15.43 0.67 14.2Z" fill="none" stroke="#4b5b8c" stroke-width="1.35"/><path d="M6.9 0.8V4.8H11.2" fill="none" stroke="#4b5b8c" stroke-width="1.2"/><path d="M7.6 1.2L10.8 4.2H7.6Z" fill="#4b5b8c"/><path d="M3.7 8.3L2 10L3.7 11.7M7.7 8.3L9.5 10L7.7 11.7M6.9 7L4.5 12.8" fill="none" stroke="#4b5b8c" stroke-width="1.15"/></svg><span style="margin-top:0.15px" class="c1">my-account.css</span><span style="margin-top:0.15px" class="c2">2.59 KB</span><span style="margin-top:0.15px" class="c3">Mar 15, 2017, 7:52 AM</span><span style="margin-top:0.15px" class="c4">text/css</span></div>
<div class="row" style="top:379.80px;background:#f9f9f9"><svg class="fi" width="12" height="16.2" viewBox="0 0 12 16.2"><path d="M0.67 1.9Q0.67 0.67 1.9 0.67H7.9L11.33 4.1V14.2Q11.33 15.43 10.1 15.43H1.9Q0.67 15.43 0.67 14.2Z" fill="none" stroke="#4b5b8c" stroke-width="1.35"/><path d="M6.9 0.8V4.8H11.2" fill="none" stroke="#4b5b8c" stroke-width="1.2"/><path d="M7.6 1.2L10.8 4.2H7.6Z" fill="#4b5b8c"/><path d="M3.7 8.3L2 10L3.7 11.7M7.7 8.3L9.5 10L7.7 11.7M6.9 7L4.5 12.8" fill="none" stroke="#4b5b8c" stroke-width="1.15"/></svg><span style="margin-top:0.20px" class="c1">order-opc.css</span><span style="margin-top:0.20px" class="c2">1.83 KB</span><span style="margin-top:0.20px" class="c3">Mar 15, 2017, 7:52 AM</span><span style="margin-top:0.20px" class="c4">text/css</span></div>
<div class="row" style="top:404.75px;background:#fff"><svg class="fi" width="12" height="16.2" viewBox="0 0 12 16.2"><path d="M0.67 1.9Q0.67 0.67 1.9 0.67H7.9L11.33 4.1V14.2Q11.33 15.43 10.1 15.43H1.9Q0.67 15.43 0.67 14.2Z" fill="none" stroke="#4b5b8c" stroke-width="1.35"/><path d="M6.9 0.8V4.8H11.2" fill="none" stroke="#4b5b8c" stroke-width="1.2"/><path d="M7.6 1.2L10.8 4.2H7.6Z" fill="#4b5b8c"/><path d="M3.7 8.3L2 10L3.7 11.7M7.7 8.3L9.5 10L7.7 11.7M6.9 7L4.5 12.8" fill="none" stroke="#4b5b8c" stroke-width="1.15"/></svg><span style="margin-top:0.25px" class="c1">print.css</span><span style="margin-top:0.25px" class="c2">1.73 KB</span><span style="margin-top:0.25px" class="c3">Mar 15, 2017, 7:52 AM</span><span style="margin-top:0.25px" class="c4">text/css</span></div>
<div class="row" style="top:429.70px;background:#f9f9f9"><svg class="fi" width="12" height="16.2" viewBox="0 0 12 16.2"><path d="M0.67 1.9Q0.67 0.67 1.9 0.67H7.9L11.33 4.1V14.2Q11.33 15.43 10.1 15.43H1.9Q0.67 15.43 0.67 14.2Z" fill="none" stroke="#4b5b8c" stroke-width="1.35"/><path d="M6.9 0.8V4.8H11.2" fill="none" stroke="#4b5b8c" stroke-width="1.2"/><path d="M7.6 1.2L10.8 4.2H7.6Z" fill="#4b5b8c"/><path d="M3.7 8.3L2 10L3.7 11.7M7.7 8.3L9.5 10L7.7 11.7M6.9 7L4.5 12.8" fill="none" stroke="#4b5b8c" stroke-width="1.15"/></svg><span style="margin-top:0.30px" class="c1">product.css</span><span style="margin-top:0.30px" class="c2">36.26 KB</span><span style="margin-top:0.30px" class="c3">Mar 15, 2017, 7:52 AM</span><span style="margin-top:0.30px" class="c4">text/css</span></div>
<div class="row" style="top:454.65px;background:#fff"><svg class="fi" width="12" height="16.2" viewBox="0 0 12 16.2"><path d="M0.67 1.9Q0.67 0.67 1.9 0.67H7.9L11.33 4.1V14.2Q11.33 15.43 10.1 15.43H1.9Q0.67 15.43 0.67 14.2Z" fill="none" stroke="#4b5b8c" stroke-width="1.35"/><path d="M6.9 0.8V4.8H11.2" fill="none" stroke="#4b5b8c" stroke-width="1.2"/><path d="M7.6 1.2L10.8 4.2H7.6Z" fill="#4b5b8c"/><path d="M3.7 8.3L2 10L3.7 11.7M7.7 8.3L9.5 10L7.7 11.7M6.9 7L4.5 12.8" fill="none" stroke="#4b5b8c" stroke-width="1.15"/></svg><span style="margin-top:0.35px" class="c1">product_list.css</span><span style="margin-top:0.35px" class="c2">15.57 KB</span><span style="margin-top:0.35px" class="c3">Mar 15, 2017, 7:52 AM</span><span style="margin-top:0.35px" class="c4">text/css</span></div>
<div class="row" style="top:479.60px;background:#f9f9f9"><svg class="fi" width="12" height="16.2" viewBox="0 0 12 16.2"><path d="M0.67 1.9Q0.67 0.67 1.9 0.67H7.9L11.33 4.1V14.2Q11.33 15.43 10.1 15.43H1.9Q0.67 15.43 0.67 14.2Z" fill="none" stroke="#4b5b8c" stroke-width="1.35"/><path d="M6.9 0.8V4.8H11.2" fill="none" stroke="#4b5b8c" stroke-width="1.2"/><path d="M7.6 1.2L10.8 4.2H7.6Z" fill="#4b5b8c"/><path d="M3.7 8.3L2 10L3.7 11.7M7.7 8.3L9.5 10L7.7 11.7M6.9 7L4.5 12.8" fill="none" stroke="#4b5b8c" stroke-width="1.15"/></svg><span style="margin-top:0.40px" class="c1">rtl.css</span><span style="margin-top:0.40px" class="c2">255 bytes</span><span style="margin-top:0.40px" class="c3">Mar 15, 2017, 7:52 AM</span><span style="margin-top:0.40px" class="c4">text/css</span></div>
<div class="row" style="top:504.55px;background:#fff"><svg class="fi" width="12" height="16.2" viewBox="0 0 12 16.2"><path d="M0.67 1.9Q0.67 0.67 1.9 0.67H7.9L11.33 4.1V14.2Q11.33 15.43 10.1 15.43H1.9Q0.67 15.43 0.67 14.2Z" fill="none" stroke="#4b5b8c" stroke-width="1.35"/><path d="M6.9 0.8V4.8H11.2" fill="none" stroke="#4b5b8c" stroke-width="1.2"/><path d="M7.6 1.2L10.8 4.2H7.6Z" fill="#4b5b8c"/><path d="M3.7 8.3L2 10L3.7 11.7M7.7 8.3L9.5 10L7.7 11.7M6.9 7L4.5 12.8" fill="none" stroke="#4b5b8c" stroke-width="1.15"/></svg><span style="margin-top:0.45px" class="c1">scenes.css</span><span style="margin-top:0.45px" class="c2">2.15 KB</span><span style="margin-top:0.45px" class="c3">Mar 15, 2017, 7:52 AM</span><span style="margin-top:0.45px" class="c4">text/css</span></div>
<div class="row" style="top:529.50px;background:#f9f9f9"><svg class="fi" width="12" height="16.2" viewBox="0 0 12 16.2"><path d="M0.67 1.9Q0.67 0.67 1.9 0.67H7.9L11.33 4.1V14.2Q11.33 15.43 10.1 15.43H1.9Q0.67 15.43 0.67 14.2Z" fill="none" stroke="#4b5b8c" stroke-width="1.35"/><path d="M6.9 0.8V4.8H11.2" fill="none" stroke="#4b5b8c" stroke-width="1.2"/><path d="M7.6 1.2L10.8 4.2H7.6Z" fill="#4b5b8c"/><path d="M3.7 8.3L2 10L3.7 11.7M7.7 8.3L9.5 10L7.7 11.7M6.9 7L4.5 12.8" fill="none" stroke="#4b5b8c" stroke-width="1.15"/></svg><span style="margin-top:0.50px" class="c1">sitemap.css</span><span style="margin-top:0.50px" class="c2">1.27 KB</span><span style="margin-top:0.50px" class="c3">Mar 15, 2017, 7:52 AM</span><span style="margin-top:0.50px" class="c4">text/css</span></div>
<div class="row" style="top:554.45px;background:#fff"><svg class="fi" width="12" height="16.2" viewBox="0 0 12 16.2"><path d="M0.67 1.9Q0.67 0.67 1.9 0.67H7.9L11.33 4.1V14.2Q11.33 15.43 10.1 15.43H1.9Q0.67 15.43 0.67 14.2Z" fill="none" stroke="#4b5b8c" stroke-width="1.35"/><path d="M6.9 0.8V4.8H11.2" fill="none" stroke="#4b5b8c" stroke-width="1.2"/><path d="M7.6 1.2L10.8 4.2H7.6Z" fill="#4b5b8c"/><path d="M3.7 8.3L2 10L3.7 11.7M7.7 8.3L9.5 10L7.7 11.7M6.9 7L4.5 12.8" fill="none" stroke="#4b5b8c" stroke-width="1.15"/></svg><span style="margin-top:0.55px" class="c1">stores.css</span><span style="margin-top:0.55px" class="c2">1.82 KB</span><span style="margin-top:0.55px" class="c3">Mar 15, 2017, 7:52 AM</span><span style="margin-top:0.55px" class="c4">text/css</span></div>
 </div>
</div>
<div style="position:absolute;left:254px;top:97px;width:1px;height:484px;background:#e0e0e0"></div>
<div id="shadow"></div>
<div id="status"></div>
<div class="sd" style="left:174px"></div><div class="sd" style="left:362px"></div><div class="sd" style="left:550px"></div><div class="sd" style="left:738px"></div><div class="sd" style="left:925px"></div>
</body></html>
